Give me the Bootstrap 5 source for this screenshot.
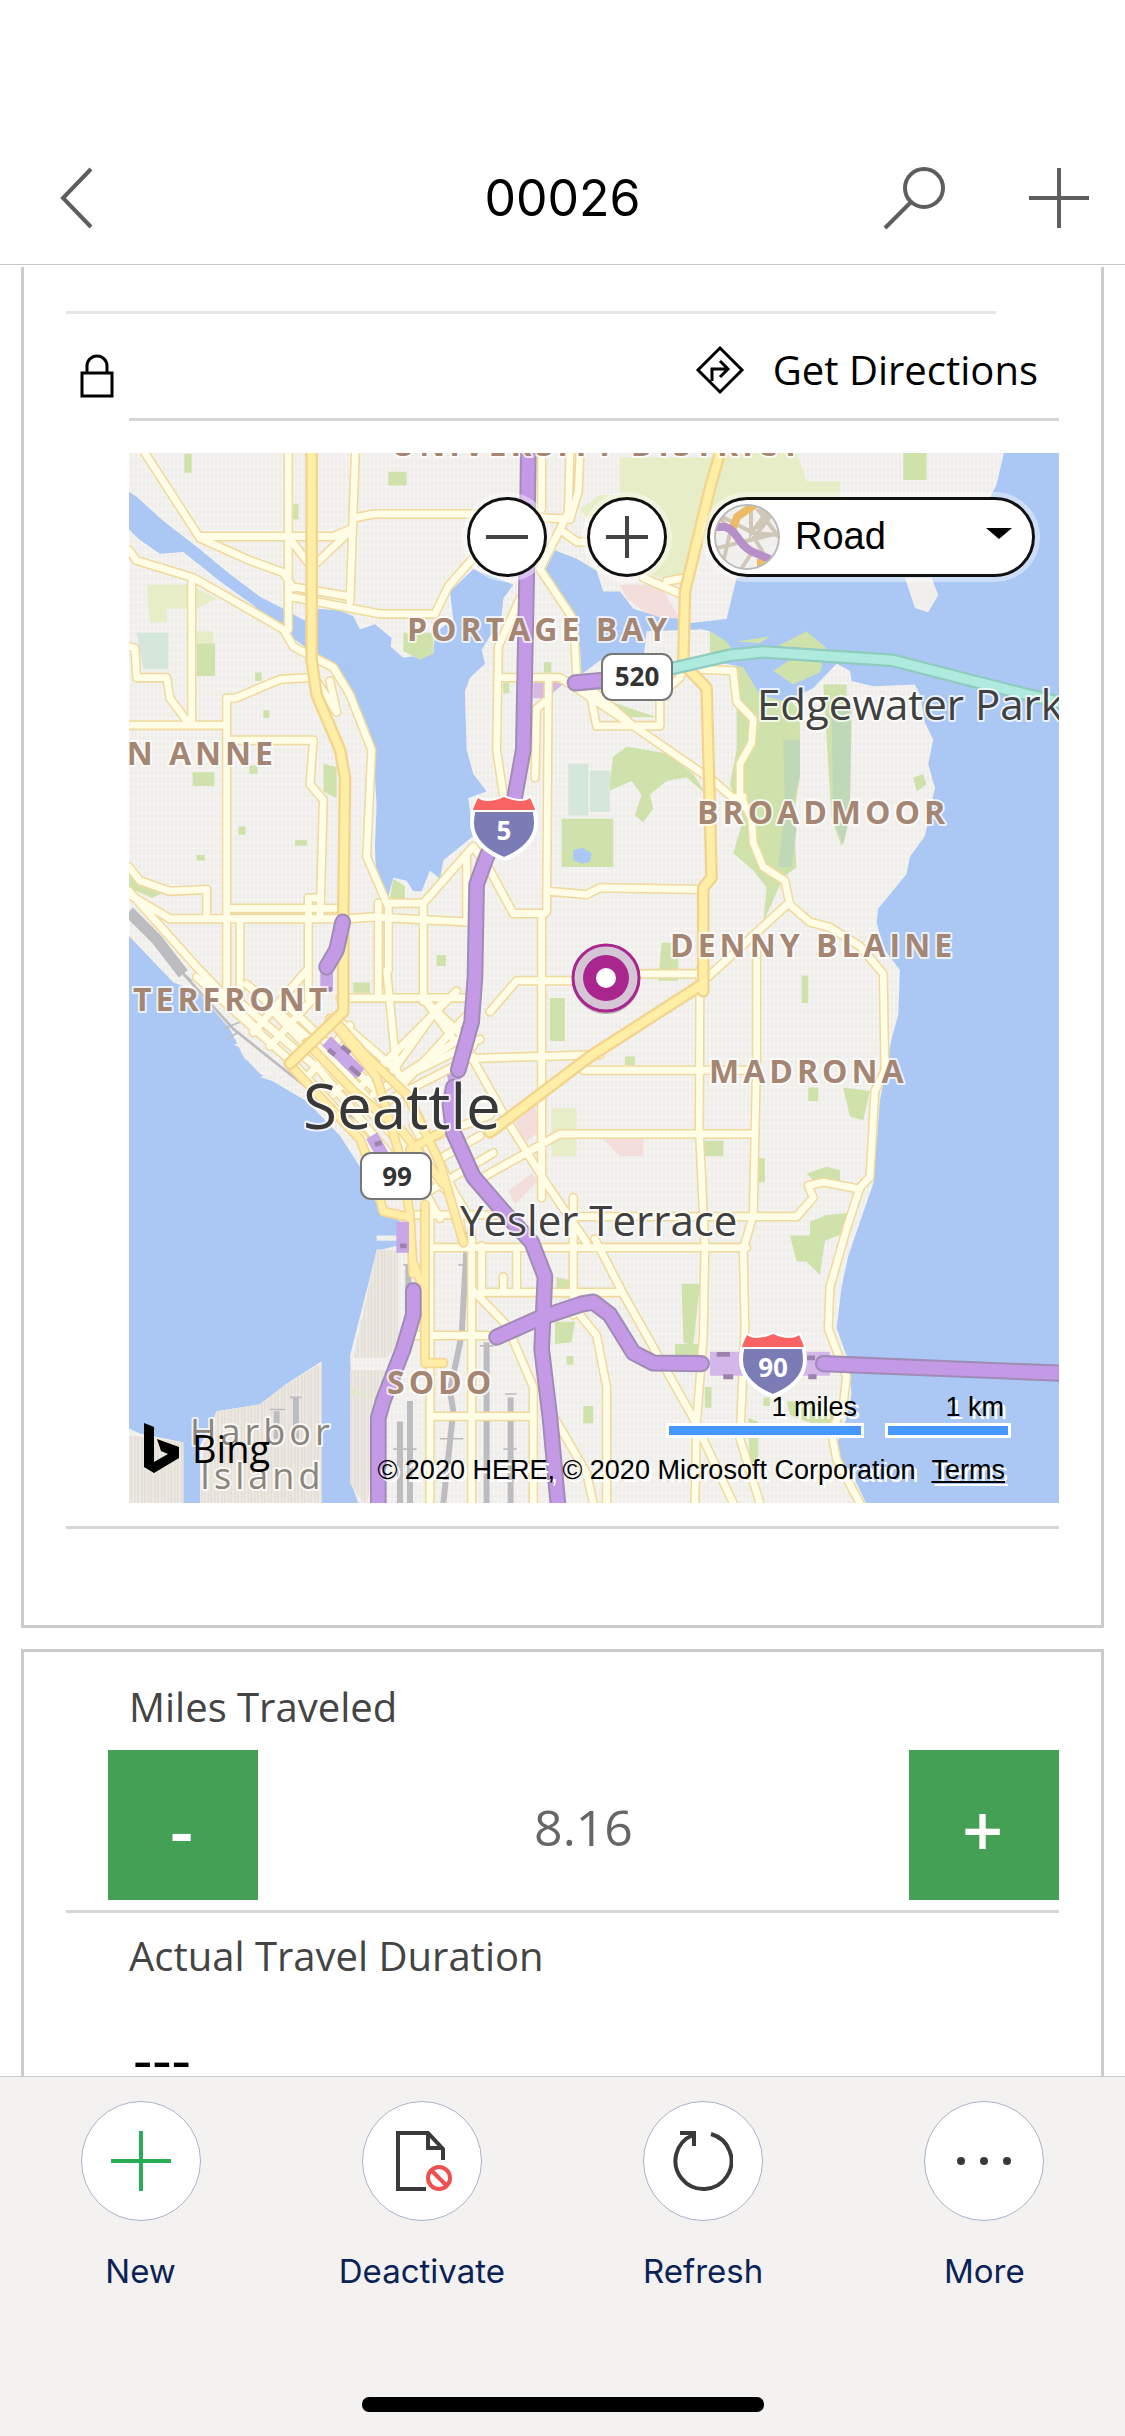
<!DOCTYPE html>
<html lang="en">
<head>
<meta charset="utf-8">
<meta name="viewport" content="width=device-width, initial-scale=1">
<title>00026</title>
<link href="https://cdn.jsdelivr.net/npm/bootstrap@5.3.0/dist/css/bootstrap.min.css" rel="stylesheet">
<style>
  body { font-family: "Open Sans", "Noto Sans", sans-serif; color: #000; background: #fff; }
  svg { display: block; }
  .app-head { padding: 132px 34px 0; height: 265px; border-bottom: 1px solid #c8c8c8; font-family: Inter, sans-serif; }
  .head-side { flex: 1 1 0; height: 132px; }
  .head-actions { gap: 80px; }
  .head-title { font-size: 50px; line-height: 132px; font-weight: 400; }
  .ghost { border: 0; background: none; padding: 0; color: inherit; }
  .app-body { flex: 1 1 0; min-height: 0; padding: 2px 21px 0; }
  .panel { border: 3px solid #ccc; padding: 0 42px; }
  .panel-top { border-top: 0; padding-top: 44px; padding-bottom: 96px; margin-bottom: 21px; }
  .rule { border-bottom: 3px solid #d6d6d6; }
  .rule-pale { border-bottom: 3px solid #e5e5e5; margin-right: 63px; }
  .lock-col { flex: 0 0 63px; padding-left: 14px; }
  .dir-row { height: 107px; padding-top: 7px; }
  .dir-link { font-size: 40px; line-height: 60px; color: #000; gap: 28px; padding-right: 21px; }
  .indent { margin-left: 63px; }
  .map-field { padding: 32px 0 23px; }
  .map-box { overflow: hidden; }
  .map-box > svg { width: 100%; height: auto; }
  .map-tools { position: absolute; top: 44px; right: 24px; gap: 40px; font-family: "Liberation Sans", sans-serif; }
  .tool { height: 80px; border: 3px solid #111; border-radius: 40px; background: #fff; box-shadow: 0 0 0 5px rgba(255,255,255,.4); }
  .tool-round { width: 80px; padding: 0; display: flex; align-items: center; justify-content: center; }
  .tool-style { width: 328px; position: relative; }
  .tool-style svg { position: absolute; pointer-events: none; }
  .style-thumb { left: 3px; top: 3px; }
  .style-caret { right: 20px; top: 28px; }
  .tool-style select { width: 100%; height: 100%; border: 0; border-radius: 40px; background: none; appearance: none; padding: 0 0 2px 85px; font-size: 38px; color: #000; }
  .map-legend { position: absolute; right: 54px; bottom: 13px; font: 27px/40px "Liberation Sans", sans-serif; color: #000; text-shadow: 3px 3px 0 #fff; }
  .map-legend a { color: #000; margin-left: 16px; }
  .scale-item { line-height: 32px; text-align: right; }
  .scale-item span { padding-right: 7px; }
  .scale-bar { height: 15px; border: 3px solid #fff; background: #4497ff; }
  .scale-mi { width: 198px; }
  .scale-km { width: 126px; }
  .scales { gap: 21px; margin: 0 -6px 12px 0; }
  .bing { position: absolute; left: 15px; bottom: 27px; gap: 12px; font-size: 38px; line-height: 56px; }
  .field-label { font-size: 40px; line-height: 60px; color: #444; display: block; }
  .stepper { margin-left: 42px; padding-top: 13px; }
  .step-btn { width: 150px; height: 150px; background: #43a054; color: #fff; font-size: 72px; line-height: 72px; font-weight: 600; border: 0; border-radius: 0; padding: 8px 3px 0 0; }
  .step-value { flex: 1 1 0; min-width: 0; border: 0; text-align: center; font-size: 50px; color: #666; padding: 4px 0 0; background: none; }
  .miles { padding: 25px 0 10px; }
  .duration { padding-top: 13px; }
  .duration output { display: block; font-size: 60px; line-height: 80px; padding: 32px 0 200px 4px; }
  .app-foot { background: #f3f2f1; border-top: 1px solid #c8c8c8; padding: 24px 0; font-family: Inter, sans-serif; }
  .foot-btn { font-size: 33px; line-height: 40px; color: #0b2256; gap: 30px; }
  .foot-disc { width: 120px; height: 120px; border-radius: 50%; background: #fff; border: 1px solid #a9b2c9; }
  .home-bar { width: 402px; height: 15px; border-radius: 7px; background: #000; margin: 106px auto 0; }
  /* map layers */
  .ln path, .ln use { fill: none; stroke-linejoin: round; stroke-linecap: round; }
  .ln .butt { stroke-linecap: butt; }
  .area { font: 700 32px "Open Sans", sans-serif; letter-spacing: 4px; fill: #a48672; }
  .town { font: 400 42px "Open Sans", sans-serif; fill: #404040; stroke: none; }
  .city { font: 500 62px "Open Sans", sans-serif; fill: #383838; }
  .isle { font: 500 36px "Open Sans", sans-serif; letter-spacing: 4px; fill: #8c867c; }
  .halo text { paint-order: stroke; stroke: rgba(255,255,255,.75); stroke-width: 4px; stroke-linejoin: round; }
  .sign { font: 700 26px "Open Sans", sans-serif; text-anchor: middle; fill: #333; }
  .sign-light { fill: #fff; }
</style>
</head>
<body>
<div class="d-flex flex-column vh-100 overflow-hidden">
  <header class="app-head d-flex align-items-center">
    <div class="head-side d-flex align-items-center">
      <button class="ghost ps-4" aria-label="Back"><svg width="44" height="64" viewBox="0 0 44 64" fill="none" stroke="#605e5c" stroke-width="4"><path d="M33 3 5 32l28 29"/></svg></button>
    </div>
    <h1 class="head-title m-0">00026</h1>
    <div class="head-side head-actions d-flex align-items-center justify-content-end">
      <button class="ghost" aria-label="Search"><svg width="64" height="64" viewBox="0 0 64 64" fill="none" stroke="#605e5c" stroke-width="4"><circle cx="41" cy="22" r="19"/><path d="M28 36 2 62"/></svg></button>
      <button class="ghost" aria-label="Add"><svg width="64" height="64" viewBox="0 0 64 64" fill="none" stroke="#605e5c" stroke-width="4"><path d="M32 2v60M2 32h60"/></svg></button>
    </div>
  </header>

  <main class="app-body overflow-hidden">
    <section class="panel panel-top">
      <div class="rule-pale"></div>
      <div class="d-flex">
        <div class="lock-col d-flex align-items-center pt-3"><svg width="34" height="44" viewBox="0 0 34 44" fill="none" stroke="#000" stroke-width="3"><path d="M2 19h30v23H2zM7 19v-7a10 10 0 0 1 20 0v7"/></svg></div>
        <div class="dir-row rule flex-grow-1 d-flex justify-content-end align-items-center">
          <a href="#" class="dir-link d-flex align-items-center text-decoration-none"><svg width="50" height="50" viewBox="0 0 50 50" fill="none" stroke="#000" stroke-width="3"><path d="M25 3l22 22-22 22L3 25zM17 36V24h15M25 16l8 8-8 8"/></svg>Get Directions</a>
        </div>
      </div>

      <div class="map-field rule">
        <div class="map-box indent position-relative">
<svg viewBox="0 0 930 1050" role="img" aria-label="Road map of Seattle">
  <defs>
    <pattern id="grid" width="36" height="42" patternUnits="userSpaceOnUse"><rect width="36" height="42" fill="#efedea"/><path d="M6 0V42M18 0V42M30 0V42M0 9H36M0 33H36" stroke="#f8f7f5" stroke-width="3" fill="none"/></pattern>
    <pattern id="yard" width="20" height="60" patternUnits="userSpaceOnUse"><rect width="20" height="60" fill="#eeeae3"/><path d="M5 0V60M14 0V60" stroke="#dcd8cf" stroke-width="3"/></pattern>
    <path id="lanes" d="M75 38 240 285 390 350 490 385 520 430M240 280H640L690 260M505 38V550M706 38 690 470M710 225 760 215H1060L1350 230M520 300 575 370 690 265M510 425 690 455M510 455 780 505H945L985 425 1080 320M27 320 50 350 220 400 330 460 490 550 520 600 640 660 690 740 755 900 740 1210 800 1345M215 405V825M27 828H320M320 1620V750H345L480 695 570 690M27 600 45 605 50 690H140L150 750 200 815M330 872H580L570 1000 610 1045 600 1390M27 1240 60 1280 150 1310 260 1305V1385M27 1320 150 1390H680L760 1385 1050 1400M330 1360H660M360 1390V1620M565 1330V1620M580 1330H600M590 700 650 790 630 700M27 1310 230 1530 420 1720M775 1345V1620M805 1345V1540M800 1345H910L1060 1180 1110 1250 1180 1375H1270M910 1345V1630M1040 1210V1400M1285 700 1280 1370 1265 1380V2200M1145 690H1320L1400 740 1540 830M1200 460 1135 600 1130 900 1150 1030M1265 38V200M1350 38 1345 210 1320 260 1260 375 1360 520 1370 680M1380 38 1375 150 1350 230M1320 260 1370 295 1440 300M1285 1310 1400 1320 1440 1300 1750 1305M1250 780 1245 980M1275 760 1250 780M1410 735 1430 830H1620V740L1680 690M1410 720 1540 830 1780 990 1840 1040 1870 1035M1570 400 1690 450M1640 410 1700 400M1680 680 1720 665 1840 670 1850 760 1900 810 1895 880 1860 940V1030L1895 1100 1900 1170 1930 1240 1995 1280 2010 1350 2070 1400 2130 1415 2220 1470 2290 1550 2295 1830 2265 1890 2250 2140 2220 2170 2180 2290 2130 2460 2125 2580 2180 2720 2170 2800 2135 2880 2150 2960 2220 3087M2000 1350 1910 1430 1740 1580M1910 1430V1800L1900 2250 1870 2350 1875 2580 1860 2900 1920 3087M1560 1550H1740M1740 1539 1738 2000 1755 2340 1750 2600 1730 2850 1725 3087M1070 1795 1440 1785M1390 1830H1890M1090 2140 1320 2015H1900M1350 2255H2030L2080 2200 2065 2165 2110 2155 2220 2175M920 2345H1880M1425 2320 1510 2480 1720 2840 1840 3087M1100 2475H1500M1380 2540 1430 2600 1460 2750V3087M1060 1800 1170 1990 1280 2160 1400 2330M1110 1660 1190 1570H1440M230 1560 520 1810 780 2080M320 1600 600 1830 830 2100M380 1580 640 1800 900 2080M440 1640 1000 2200M500 1640 760 1880M650 1680 830 1830 1010 2200 1030 2340M400 1720 560 1540M450 1760 600 1600M570 1840 690 1700M640 1900 740 1790M720 1880 1010 1600M760 1900 1050 1720M800 1920 1060 1790M830 1860 1080 1740M820 1830 960 1640M840 1880 1050 1660M870 2050 1110 1960M900 2120 1080 2020M930 2180 1120 2070M930 1640 1060 1760M880 1990 1050 2260M830 2040 960 2260M660 1620H1060M800 1540 830 1830M910 1620 1000 1740M880 2250H1130M930 2230V3087M1055 2300V3087M1190 2345V2475M1360 2200V2540M1085 2340V2480M860 2600H1100M930 2835H1240M1060 2470 1160 2570 1240 2750V3087M1310 2850 1400 3000 1420 3087M1150 2430V2475"/>
    <path id="mains" d="M575 38V640L590 740 660 900 675 980 670 1380V1660L510 1810M1800 38 1770 140 1695 440 1690 650 1760 720 1775 1270 1750 1300V1600M1110 2010 1410 1790 1740 1585"/>
    <path id="avenues" d="M630 1680 770 1850 840 2080 870 2250 880 2420M505 1810 720 2030 760 2130 790 2240 860 2255M560 1750 700 1890 850 2010 970 2160M640 1680 740 1790 860 1900 960 2100 1030 2330M870 2060 980 2000M915 2220V2680H970M880 2390 900 2440"/>
    <path id="free" d="M1225 38 1220 400 1210 900 1180 1060 1100 1210 1070 1290 1065 1560 1055 1690 1015 1829M1000 1880 990 1930 1000 2010 1060 2139 1150 2240 1235 2329 1275 2429 1265 2639 1290 2839 1315 3100M1130 2605 1260 2549 1385 2509 1420 2503 1470 2540 1540 2650 1600 2680 1745 2682M2110 2682 2830 2710M880 2470V2540L850 2639 790 2789 775 2839V3100M1365 705 1460 697M668 1400 650 1480 620 1530"/>
    <path id="bridge" d="M1600 672 1650 665 1830 625 1930 615 2320 640 2560 700 2830 765"/>
  </defs>
  <g transform="translate(-9 -13) scale(.3333 .3444)">
    <rect x="27" y="38" width="2800" height="3060" fill="url(#grid)"/>
    <g fill="#cfe2ac">
      <path d="M193 40h22v55h-22zM805 92h55v40h-55zM520 185h16v45h-16zM230 590h55v95h-55zM405 675h20v25h-20zM430 785h18v22h-18zM218 965h65v40h-65zM388 945h25v25h-25zM610 940l40 10v90l-40-20zM355 1122h22v24h-22zM525 1162h36v16h-36zM230 1205h25v16h-25zM1150 705h18v30h-18zM1272 645h22v30h-22zM1325 1100h155v140h-155zM950 1495h28v32h-28zM27 1265l100 50-30 15-70-30zM2350 38h70v78h-70zM1480 920l40-30 120 20 80 60 40 60-60-50-60 10-50 40 10 40-30 40-25-20 20-60-30-40-70 30zM1410 735l80 30 120 40-90 0zM1625 1460h50v110h-60zM1290 1620h45v125h-45zM1310 2430l40 10v50h-40zM1305 2560h60l-10 60-50 5zM1390 2805h30v50h-30zM1340 2660h20v25h-20zM700 1575h50v30h-50zM1685 2450h55l-20 180-30-10zM1665 2625h75v60h-75zM1755 2035h55v45h-55zM2045 1555h20v80h-20zM2065 1880h30v40h-30zM2170 1880l80 10-20 85-40-10zM2010 2310h60v-40l50-20 60-5-10 60-55 20-15 100-40-40h-30zM2060 2130l60-20 40 10v30h-80zM1915 2085h20v70h-20zM1515 1790h30v25h-30zM1930 2780h20v25h-20zM2000 2790l110 10 60 50-60 20-100-40zM1755 2750h20v60h-20zM1885 2840l30 10v100l-25 30z"/>
      <path d="M1850 650 1960 690 2040 790 2040 980 2020 1100 2030 1240 1990 1270 1930 1400 1940 1300 1900 1250 1840 1200 1870 1100 1830 1000 1850 900z"/>
      <path d="M2110 710h70l5 380-20 90-30-80zM2380 980l30-10 10 30-30 20z"/>
    </g>
    <g fill="#e7edc6">
      <path d="M1500 50H1780L1900 38H2030L2060 120H2160V240L1800 240 1680 410 1580 390 1500 300 1430 260 1380 200 1440 160H1500zM80 420h130l80 40-60 30-90 0 0 40-50 0zM200 555h80v35h-80zM1295 1940h75v140h-75z"/>
    </g>
    <path fill="#bfd8b7" d="M1990 870h50v100l-30 130 20 30-15 110h-40l20-170zM2135 780h60l-5 310-20 85-30-70z"/>
    <path fill="#d5e6da" d="M50 560h95v105h-75zM1410 960h60v120h-60zM1345 940l60 0v150h-60z"/>
    <path fill="#abc7f3" d="M1360 1190l30-5 25 15-5 25-25 5-25-10z"/>
    <path fill="#f3dedb" d="M1500 420h120l60 100-90-10-70-50zM1245 1930l10 80-40 30-30-60zM1165 2180l70-50 20 20-70 70zM1450 2030h120v50h-70z"/>
    <path fill="#d6b8e0" d="M1240 700h100l-60 50h-40z"/>

    <!-- lakes, canal and bay -->
    <g fill="#abc7f3">
      <path d="M27 150 50 165 130 235 230 310 330 390 420 455 490 490 555 525 590 490 660 495 700 512 720 550 765 535 815 575 812 600 850 632 940 620 945 560 1000 520 990 440 1060 375 1180 420 1150 460 1145 510 1110 570 1085 610 1095 650 1050 690 1035 730 1040 900 1060 970 1100 1020 1045 1040 1060 1150 970 1220 960 1275 930 1250 905 1310 880 1310 860 1280 820 1270 805 1325 770 1290 765 1180 770 1060 760 900 700 740 640 655 590 625 555 600 490 555 400 480 300 410 190 325 120 330 60 290 27 260z"/>
      <path d="M1305 320 1370 345 1430 380 1450 440 1500 440 1540 490 1620 515 1690 520 1740 550 1580 555 1570 640 1440 640 1385 680 1380 600 1350 520 1270 390z"/>
      <path d="M2652 38H2830V3100H2245L2210 3029 2150 2959V2919L2180 2839 2195 2769 2180 2659 2150 2579 2165 2459 2185 2369 2260 2159 2280 1919 2315 1739 2335 1669 2340 1539 2290 1475 2270 1400 2275 1360 2360 1260 2370 1210 2415 1150 2445 1010 2425 940 2440 870 2415 820 2400 740 2385 710 2260 715 2195 700 2190 670 2150 650 2080 720 2000 760 1920 740 1870 660 1770 640V555L1680 535 1820 520 1850 400 2180 370 2560 260 2630 130z"/>
      <path d="M27 1440 160 1575 230 1600 330 1710 370 1790 420 1840 560 1920 660 2020 720 2110 770 2219 840 2269 835 2339 770 2354 690 2660 695 2760 700 2840 690 3020 720 3100H605V2675L500 2740 420 2800 290 2820 240 2920V3100H190V2910L60 2885 27 2870z"/>
    </g>
    <path fill="#cfe2ac" d="M1770 555l50 30 20 30-50 30-20-30zM1970 600l90-45 60 50-20 70-80 35-60-40 80-50zM1850 585l100-15-30 20zM850 560l90 0v60l-40 18-50-25zM820 1275l35 20v45l-45-10z"/>
    <path fill="#f1efec" d="M2355 400h80l20 50-30 50-40-12zM770 2310h70v15h-70zM340 1755l40-5-10 20zM370 1795l50-10 0 25zM420 1850l50-15 0 30zM680 2040l50-10 0 30zM710 2090l40-10 10 40z"/>
    <path fill="url(#yard)" d="M770 2350 835 2354V2630L800 2665H700zM290 2820 420 2800 500 2740 605 2680V3100H240L250 2920zM27 2890 190 2910V3100H27zM690 2700H800L740 3100 690 3030z"/>
    <path fill="#e0e9c8" d="M690 2750l70 30-70-10z"/>
    <g fill="none" stroke="#bdbcc0">
      <path stroke-width="34" d="M27 1370 110 1450 190 1550"/>
      <path stroke-width="8" d="M190 1550 340 1710 560 1880 720 1980"/>
      <path stroke-width="18" d="M1042 2300 1025 2600 990 2760 1000 2820 970 3087M1100 2620V3087M870 2790V3087M1172 2780V3087M840 2850V3087M528 2780V2900M470 2820V2900M865 2395V2470"/>
      <path stroke-width="5" d="M180 1540 215 1570M310 1710 360 1690M320 1740 355 1720M1015 2395H1050M1080 2630H1120M1155 2770H1190M850 2395H880M510 2780H545M450 2815H495M820 2930H890M1150 2930H1190M960 2900H1030"/>
    </g>

    <g class="ln">
      <use href="#lanes" stroke="#f0d99c" stroke-width="29"/>
      <use href="#lanes" stroke="#fffde6" stroke-width="20"/>
      <use href="#avenues" stroke="#f5d694" stroke-width="30"/>
      <use href="#avenues" stroke="#ffeda8" stroke-width="20"/>
      <use href="#mains" stroke="#f3d48e" stroke-width="38"/>
      <use href="#mains" stroke="#ffefa6" stroke-width="24"/>
      <path class="butt" stroke="#c9a6e6" stroke-width="38" d="M620 1530V1600M620 1745 720 1840M755 2020 790 2080M1000 1840 1010 1900M848 2270V2360"/>
      <path class="butt" stroke="#d4b6ea" stroke-width="70" d="M1770 2682H2130"/>
      <path class="butt" stroke="#9a84ae" stroke-width="14" d="M1790 2655H1830M1810 2720H1840M2060 2665H2085M2065 2720H2090M625 1770 645 1785M690 1820 720 1845M665 1760 690 1780M765 2045 785 2040M840 2340H860M610 1595H635"/>
      <use href="#bridge" stroke="#8fcbbf" stroke-width="40"/>
      <use href="#bridge" stroke="#aeeadd" stroke-width="27"/>
      <use href="#free" stroke="#a08cb6" stroke-width="50"/>
      <use href="#free" stroke="#c499e6" stroke-width="38"/>
    </g>
  </g>

  <g class="halo">
    <text class="area" x="262" y="3">UNIVERSITY DISTRICT</text>
    <text class="area" x="278" y="188">PORTAGE BAY</text>
    <text class="area" x="148" y="312" text-anchor="end">N ANNE</text>
    <text class="area" x="568" y="371">BROADMOOR</text>
    <text class="area" x="541" y="504">DENNY BLAINE</text>
    <text class="area" x="4" y="558">TERFRONT</text>
    <text class="area" x="580" y="630">MADRONA</text>
    <text class="area" x="258" y="941">SODO</text>
    <text class="isle" x="61" y="992">Harbor</text>
    <text class="isle" x="71" y="1036">Island</text>
    <text class="town" x="628" y="267">Edgewater Park</text>
    <text class="city" x="174" y="676">Seattle</text>
    <text class="town" x="331" y="783">Yesler Terrace</text>
  </g>

  <defs>
    <path id="shield" d="M5 0c5 4 15 4 26-1 11 5 21 5 26 1 4 8 6 16 6 25 0 18-16 30-32 36C15 55-1 43-1 25-1 16 1 8 5 0z"/>
    <path id="crown" d="M5 0c5 4 15 4 26-1 11 5 21 5 26 1 2 4 4 8 5 12H0c1-4 3-8 5-12z"/>
  </defs>
  <g transform="translate(344 345)"><use href="#shield" fill="#7b7bb6" stroke="#fff" stroke-width="4"/><use href="#crown" fill="#fa6363"/><path d="M0 13H62" stroke="#fff" stroke-width="2"/><text class="sign sign-light" x="31" y="42">5</text></g>
  <g transform="translate(613 882)"><use href="#shield" fill="#7b7bb6" stroke="#fff" stroke-width="4"/><use href="#crown" fill="#fa6363"/><path d="M0 13H62" stroke="#fff" stroke-width="2"/><text class="sign sign-light" x="31" y="42">90</text></g>
  <g fill="#fff" stroke="#777" stroke-width="2"><rect x="473" y="201" width="70" height="46" rx="10"/><rect x="232" y="700" width="70" height="46" rx="10"/></g>
  <text class="sign" x="508" y="233">520</text>
  <text class="sign" x="268" y="733">99</text>
  <g><circle cx="477" cy="527" r="34" fill="#000" opacity=".25"/><circle cx="477" cy="525" r="33" fill="#d5c6d6" stroke="#a9268f" stroke-width="3"/><circle cx="477" cy="525" r="23" fill="#a9268f"/><circle cx="477" cy="525" r="10" fill="#fff"/></g>
</svg>
          <div class="map-tools d-flex">
            <button class="tool tool-round" aria-label="Zoom out"><svg width="44" height="44" stroke="#444" stroke-width="4"><path d="M1 22h42"/></svg></button>
            <button class="tool tool-round" aria-label="Zoom in"><svg width="44" height="44" stroke="#444" stroke-width="4"><path d="M1 22h42M22 1v42"/></svg></button>
            <div class="tool tool-style">
              <svg class="style-thumb" width="68" height="68" viewBox="0 0 68 68" fill="none"><defs><clipPath id="disc"><circle cx="34" cy="34" r="32"/></clipPath></defs><circle cx="34" cy="34" r="32" fill="#f2f0ee"/><g clip-path="url(#disc)"><path d="M10 14l30 16 24 2M38 2v28l20-26M40 36L60 10 46 8l20 26M0 46l66-16M18 26l-8 34M42 36l14 24M28 66l12-18M18 28L6 14M62 4L44 26" stroke="#cfc8b8" stroke-width="4"/><path d="M44 0L24 14 18 30M48 56v12" stroke="#ecbb66" stroke-width="8"/><path d="M0 24h12c12 2 14 20 28 25l24 10" stroke="#b78fc9" stroke-width="8"/></g><circle cx="34" cy="34" r="32" stroke="#bdbbb9" stroke-width="2"/></svg>
              <select aria-label="Map style"><option>Road</option><option>Aerial</option></select>
              <svg class="style-caret" width="26" height="12" viewBox="0 0 26 12"><path d="M0 0h26L13 11z"/></svg>
            </div>
          </div>
          <div class="bing d-flex align-items-center"><svg width="36" height="50" viewBox="0 0 36 50"><path d="M0 0l10 4v35l14-8-7-3-4-12 22 8v11L10 50 0 44z"/></svg>Bing</div>
          <div class="map-legend">
            <div class="scales d-flex justify-content-end">
              <div class="scale-item"><span>1 miles</span><div class="scale-bar scale-mi"></div></div>
              <div class="scale-item"><span>1 km</span><div class="scale-bar scale-km"></div></div>
            </div>
            <div class="text-nowrap">© 2020 HERE, © 2020 Microsoft Corporation<a href="#">Terms</a></div>
          </div>
        </div>
      </div>
    </section>

    <section class="panel">
      <div class="miles rule">
        <label class="field-label indent mb-0" for="miles">Miles Traveled</label>
        <div class="stepper d-flex">
          <button class="step-btn" aria-label="Decrease">-</button>
          <input class="step-value" id="miles" type="text" inputmode="decimal" value="8.16">
          <button class="step-btn" aria-label="Increase">+</button>
        </div>
      </div>
      <div class="duration indent">
        <label class="field-label" for="duration">Actual Travel Duration</label>
        <output id="duration">---</output>
      </div>
    </section>
  </main>

  <footer class="app-foot">
    <nav class="row g-0">
      <div class="col d-flex justify-content-center"><button class="ghost foot-btn d-flex flex-column align-items-center"><span class="foot-disc d-flex align-items-center justify-content-center"><svg width="60" height="60" stroke="#27ae52" stroke-width="4"><path d="M30 0v60M0 30h60"/></svg></span>New</button></div>
      <div class="col d-flex justify-content-center"><button class="ghost foot-btn d-flex flex-column align-items-center"><span class="foot-disc d-flex align-items-center justify-content-center"><svg width="60" height="60" viewBox="0 0 60 60" fill="none" stroke="#3b3a39" stroke-width="4"><path d="M34 58H6V2h30l15 16v11M36 3v14h15"/><g stroke="#ee5050"><circle cx="47" cy="47" r="11"/><path d="M39 39l16 16"/></g></svg></span>Deactivate</button></div>
      <div class="col d-flex justify-content-center"><button class="ghost foot-btn d-flex flex-column align-items-center"><span class="foot-disc d-flex align-items-center justify-content-center"><svg width="60" height="60" viewBox="0 0 60 60" fill="none" stroke="#3b3a39" stroke-width="4"><path d="M7 2h14v13M20 4A28 28 0 1 0 38 3"/></svg></span>Refresh</button></div>
      <div class="col d-flex justify-content-center"><button class="ghost foot-btn d-flex flex-column align-items-center"><span class="foot-disc d-flex align-items-center justify-content-center"><svg width="60" height="60" fill="#3b3a39"><circle cx="7" cy="30" r="4"/><circle cx="30" cy="30" r="4"/><circle cx="53" cy="30" r="4"/></svg></span>More</button></div>
    </nav>
    <div class="home-bar"></div>
  </footer>
</div>
<script src="https://cdn.jsdelivr.net/npm/bootstrap@5.3.0/dist/js/bootstrap.bundle.min.js"></script>
</body>
</html>
